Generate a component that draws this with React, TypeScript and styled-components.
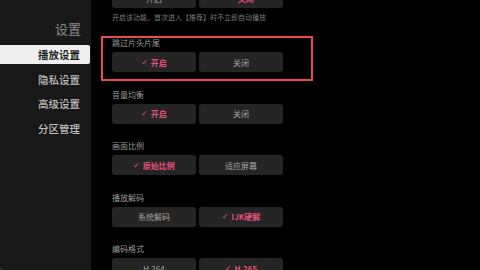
import React from "react";
import styled, { createGlobalStyle } from "styled-components";

const GlobalStyle = createGlobalStyle`
  html, body {
    margin: 0;
    padding: 0;
    background: #2b2b2b;
  }
  body {
    font-family: "Noto Sans CJK SC", "Noto Sans", sans-serif;
  }
`

const Page = styled.div`
  display: flex;
  width: 480px;
  height: 270px;
  overflow: hidden;
  border-bottom-left-radius: 6px;
  background: #000;
`

const Sidebar = styled.nav`
  width: 91px;
  flex-shrink: 0;
  background: #181818;
  padding-top: 21px;
  display: flex;
  flex-direction: column;
  gap: 5.5px;
`

const SideTitle = styled.div`
  font-size: 13px;
  line-height: 16px;
  color: #8a8a8a;
  text-align: right;
  padding-right: 10px;
  margin-bottom: 2.5px;
`

const SideItem = styled.div<{ $active?: boolean }>`
  height: 19px;
  line-height: 19px;
  font-size: 10.5px;
  font-weight: ${p => (p.$active ? 700 : 500)};
  text-align: right;
  padding-right: 10px;
  margin-right: 1px;
  color: ${p => (p.$active ? "#1e1e1e" : "#bdbdbd")};
  background: ${p => (p.$active ? "#efefef" : "transparent")};
  border-radius: 0 2px 2px 0;
`

const Main = styled.main`
  flex: 1;
  padding-left: 10px;
  display: flex;
  flex-direction: column;
  gap: 6.5px;
`

const Top = styled.div`
  margin-top: -12px;
  padding-left: 11px;
  display: flex;
  flex-direction: column;
  gap: 4px;
  margin-bottom: 7.5px;
`

const Hint = styled.div`
  font-size: 7px;
  line-height: 10px;
  color: #7a7a7a;
`

const Section = styled.section<{ $focused?: boolean }>`
  width: 212px;
  box-sizing: border-box;
  padding: 0 28px 7px 9px;
  border-width: 2px;
  border-style: solid;
  border-color: ${p => (p.$focused ? "#ea4a4e" : "transparent")};
`

const Label = styled.div`
  font-size: 8px;
  line-height: 10px;
  color: #9a9a9a;
  margin-bottom: 4px;
`

const Options = styled.div`
  display: flex;
  gap: 3px;
`

const Option = styled.div<{ $on?: boolean }>`
  width: 84px;
  height: 20px;
  border-radius: 3px;
  background: #252525;
  display: flex;
  align-items: center;
  justify-content: center;
  gap: 3px;
  font-size: 8px;
  font-weight: ${p => (p.$on ? 700 : 400)};
  color: ${p => (p.$on ? "#e2527c" : "#a5a5a5")};
`

const Check = styled.span`
  font-size: 8px;
  font-family: "DejaVu Sans", sans-serif;
`

type Group = {
  label: string
  options: string[]
  selected: number
  focused?: boolean
}

const groups: Group[] = [
  { label: "跳过片头片尾", options: ["开启", "关闭"], selected: 0, focused: true },
  { label: "音量均衡", options: ["开启", "关闭"], selected: 0 },
  { label: "画面比例", options: ["原始比例", "适应屏幕"], selected: 0 },
  { label: "播放解码", options: ["系统解码", "IJK硬解"], selected: 1 },
  { label: "编码格式", options: ["H.264", "H.265"], selected: 1 },
];

function OptionRow({ options, selected }: { options: string[]; selected: number }) {
  return (
    <Options>
      {options.map((o, i) => (
        <Option key={o} $on={i === selected}>
          {i === selected && <Check>✓</Check>}
          {o}
        </Option>
      ))}
    </Options>
  )
}

export default function App() {
  return (
    <>
      <GlobalStyle />
      <Page>
        <Sidebar>
          <SideTitle>设置</SideTitle>
          <SideItem $active>播放设置</SideItem>
          <SideItem>隐私设置</SideItem>
          <SideItem>高级设置</SideItem>
          <SideItem>分区管理</SideItem>
        </Sidebar>
        <Main>
          <Top>
            <OptionRow options={["开启", "关闭"]} selected={1} />
            <Hint>开启该功能，首次进入【推荐】时不立即自动播放</Hint>
          </Top>
          {groups.map(g => (
            <Section key={g.label} $focused={g.focused}>
              <Label>{g.label}</Label>
              <OptionRow options={g.options} selected={g.selected} />
            </Section>
          ))}
        </Main>
      </Page>
    </>
  )
}
